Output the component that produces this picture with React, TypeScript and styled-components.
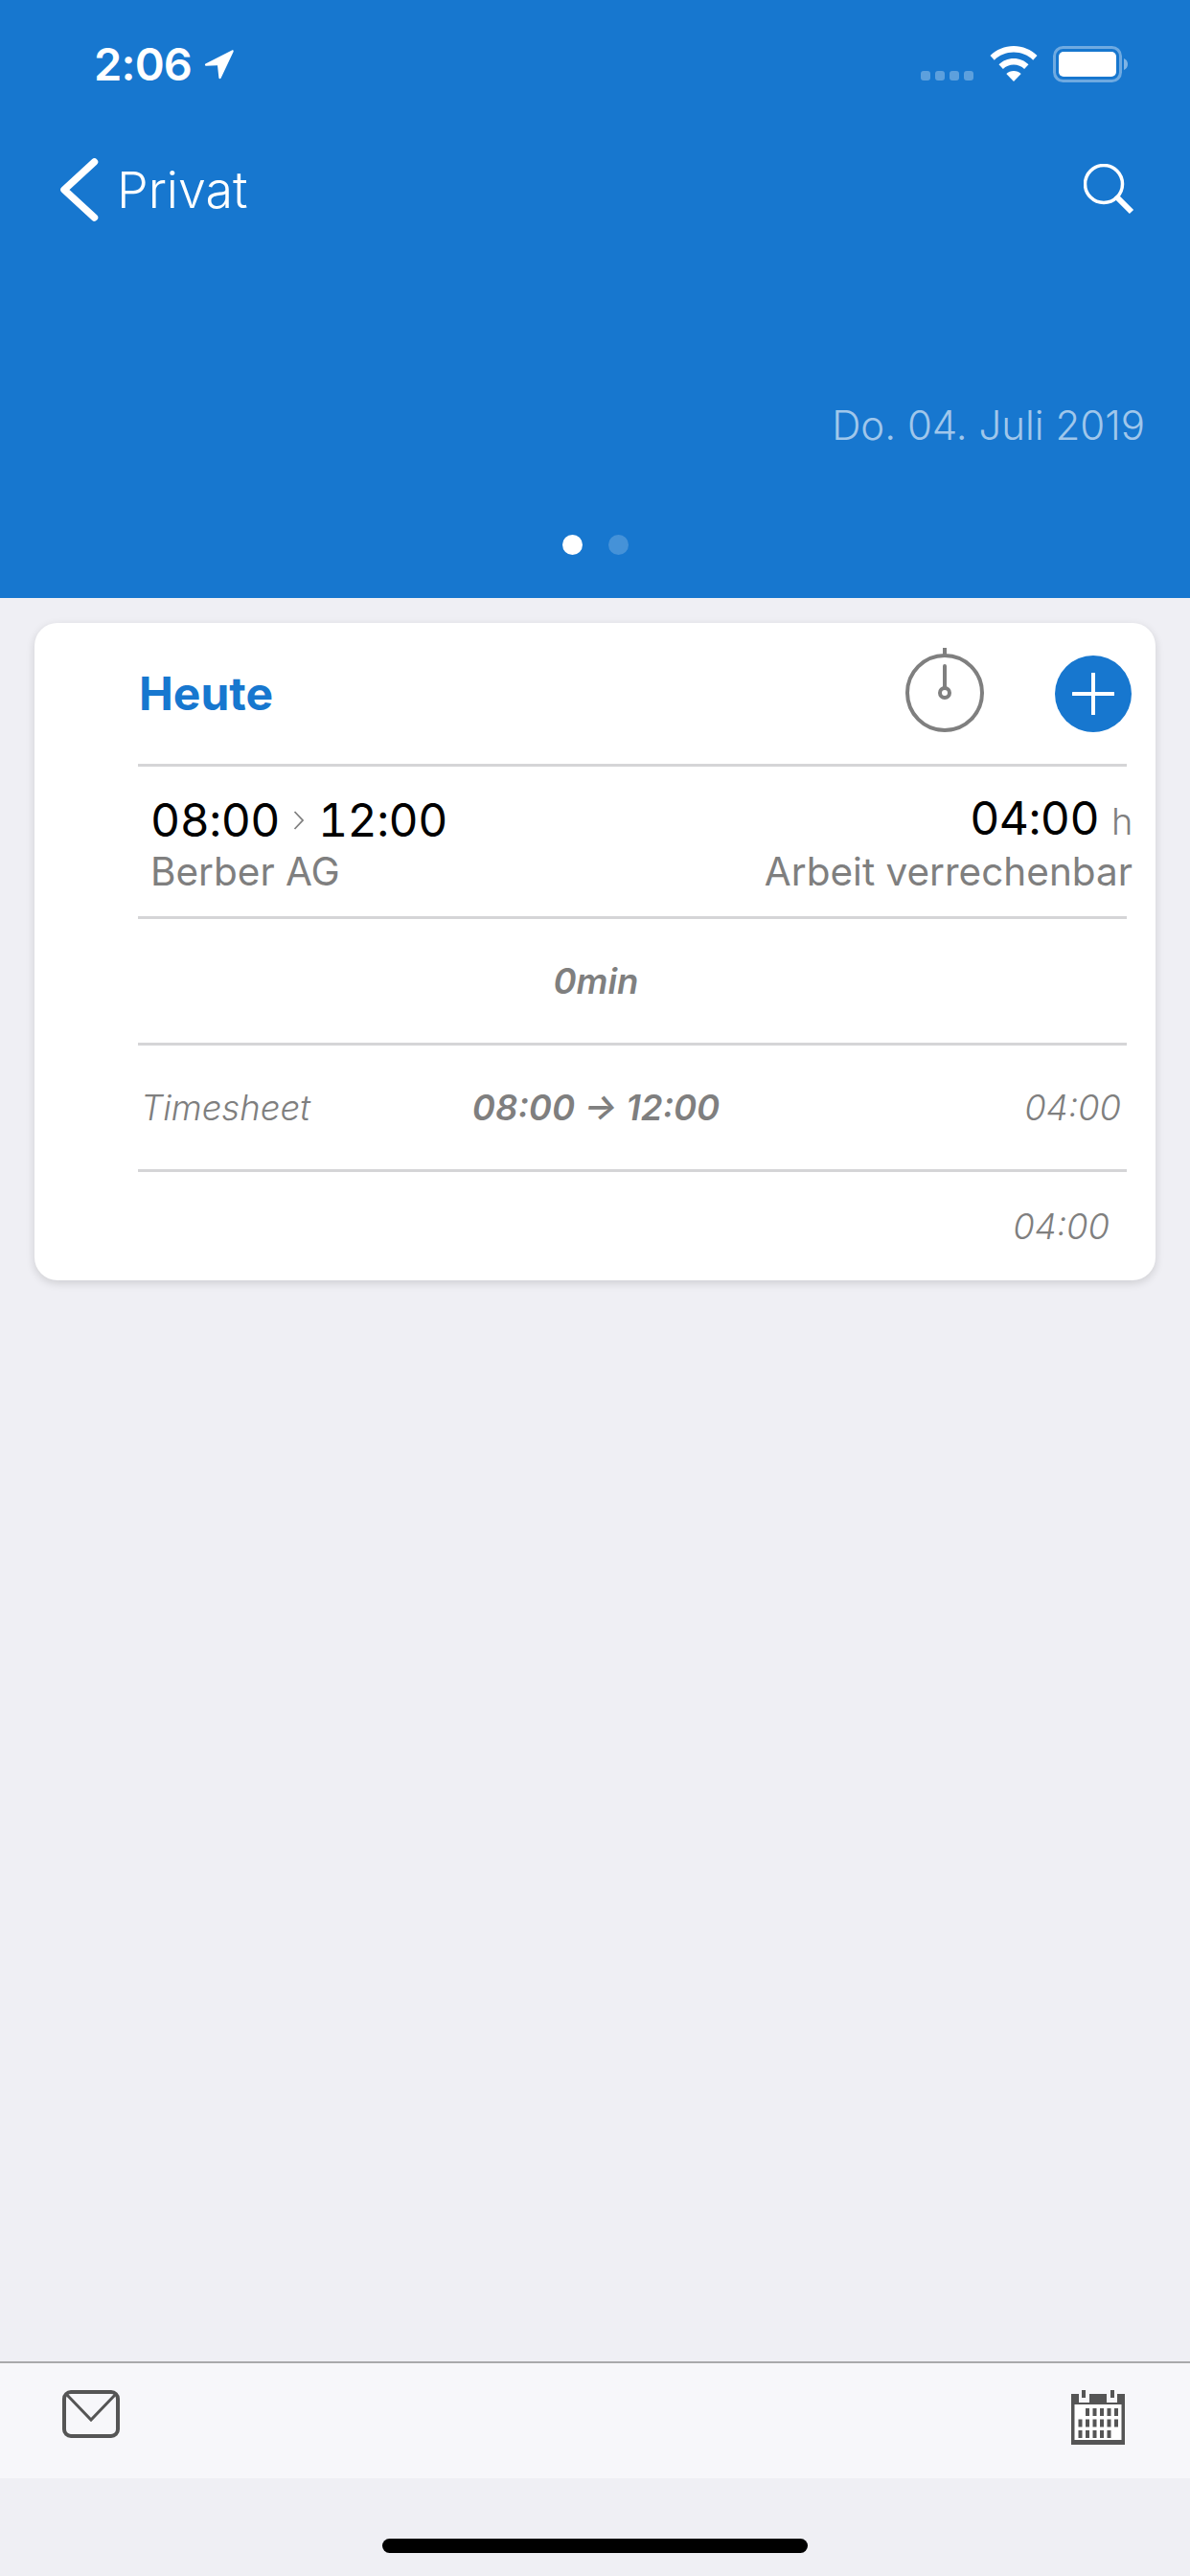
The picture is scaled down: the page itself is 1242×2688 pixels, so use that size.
import React from 'react';
import styled, { createGlobalStyle } from 'styled-components';

const BLUE = '#1777cf';
const GRAY = '#7f7f7f';
const LINE = '#d5d5d7';
const FONT = 'Inter, "Liberation Sans", sans-serif';

const GlobalStyle = createGlobalStyle`
  html, body {
    margin: 0;
    padding: 0;
    background: #efeff4;
    font-family: ${FONT};
  }
  * {
    box-sizing: border-box;
  }
`;

const Screen = styled.div`
  width: 1242px;
  height: 2688px;
  display: flex;
  flex-direction: column;
  background: #efeff4;
  overflow: hidden;
`;

const Header = styled.header`
  height: 624px;
  flex: none;
  display: flex;
  flex-direction: column;
  background: ${BLUE};
  color: #fff;
`;

const StatusBar = styled.div`
  height: 70px;
  margin-top: 43px;
  padding: 0 63px 0 98px;
  display: flex;
  align-items: flex-start;
  justify-content: space-between;
`;

const Clock = styled.div`
  display: flex;
  align-items: center;
  gap: 13px;
  font-size: 47px;
  line-height: 48px;
  font-weight: 600;
  letter-spacing: -0.8px;
`;

const StatusIcons = styled.div`
  display: flex;
  align-items: flex-start;
  gap: 16px;
  padding-top: 5px;
`;

const SignalDots = styled.div`
  display: flex;
  gap: 5px;
  padding-top: 26px;
  margin-right: 1px;
`;

const SignalDot = styled.span`
  width: 10px;
  height: 10px;
  border-radius: 3px;
  background: rgba(255, 255, 255, 0.3);
`;

const NavBar = styled.nav`
  height: 76px;
  margin-top: 47px;
  padding: 0 57px 0 62px;
  display: flex;
  align-items: center;
  justify-content: space-between;
`;

const BackLink = styled.div`
  display: flex;
  align-items: center;
  gap: 19px;
  font-size: 52px;
  font-weight: 300;
`;

const DateLabel = styled.div`
  margin-top: 183px;
  padding-right: 47px;
  text-align: right;
  font-size: 42px;
  line-height: 50px;
  font-weight: 300;
  color: rgba(255, 255, 255, 0.6);
`;

const Pager = styled.div`
  margin-top: 89px;
  display: flex;
  justify-content: center;
  gap: 27px;
`;

const PagerDot = styled.span<{ $active?: boolean }>`
  width: 21px;
  height: 21px;
  border-radius: 50%;
  background: ${(p) => (p.$active ? '#fff' : 'rgba(255, 255, 255, 0.2)')};
`;

const Card = styled.section`
  margin: 26px 36px 0;
  height: 686px;
  flex: none;
  padding: 0 16px 0 108px;
  background: #fff;
  border-radius: 24px;
  box-shadow: 0 3px 10px rgba(0, 0, 0, 0.14);
`;

const CardHeader = styled.div`
  height: 150px;
  padding-top: 26px;
  display: flex;
  align-items: flex-start;
  border-bottom: 3px solid ${LINE};
  margin-right: 14px;
`;

const Title = styled.h2`
  margin: 23px 0 0 1px;
  flex: 1;
  font-size: 48px;
  line-height: 50px;
  font-weight: 700;
  color: ${BLUE};
`;

const AddButton = styled.div`
  width: 80px;
  height: 80px;
  margin: 8px -5px 0 74px;
  border-radius: 50%;
  background: ${BLUE};
  display: flex;
  align-items: center;
  justify-content: center;
`;

const Row = styled.div<{ $height: number }>`
  height: ${(p) => p.$height}px;
  margin-right: 14px;
  border-bottom: 3px solid ${LINE};
  display: flex;
  align-items: center;
  justify-content: space-between;
`;

const EntryRow = styled(Row)`
  display: block;
  padding-top: 24px;
`;

const EntryLine = styled.div`
  display: flex;
  align-items: center;
  justify-content: space-between;
  padding-left: 13px;
  margin-right: -6px;
`;

const Times = styled.div`
  display: flex;
  align-items: center;
  gap: 14px;
  font-size: 48px;
  line-height: 60px;
  letter-spacing: -0.5px;
  font-feature-settings: 'tnum';
  color: #000;
`;

const Duration = styled.div`
  font-size: 48px;
  line-height: 60px;
  letter-spacing: -0.5px;
  font-feature-settings: 'tnum';
  color: #000;
`;

const Unit = styled.span`
  margin-left: 13px;
  font-size: 38px;
  font-weight: 300;
  color: ${GRAY};
`;

const Detail = styled.div`
  font-size: 40.5px;
  line-height: 46px;
  font-weight: 400;
  color: ${GRAY};
`;

const Note = styled.div<{ $bold?: boolean }>`
  font-size: 36.5px;
  line-height: 44px;
  font-style: italic;
  font-weight: ${(p) => (p.$bold ? 600 : 300)};
  color: ${GRAY};
`;

const TimesheetRow = styled(Row)`
  position: relative;
  padding: 0 6px 0 3px;
`;

const CenterNote = styled(Note)`
  position: absolute;
  left: 0;
  right: 76px;
  text-align: center;
`;

const TotalRow = styled.div`
  height: 113px;
  padding: 35px 18px 0 0;
  margin-right: 14px;
  text-align: right;
`;

const Spacer = styled.div`
  flex: 1;
`;

const TabBar = styled.footer`
  height: 122px;
  flex: none;
  padding: 28px 68px 0 65px;
  display: flex;
  align-items: flex-start;
  justify-content: space-between;
  background: #f7f7fa;
  border-top: 2px solid #a9a9ab;
`;

const HomeArea = styled.div`
  height: 102px;
  flex: none;
  padding-top: 63px;
  display: flex;
  justify-content: center;
`;

const HomeBar = styled.div`
  width: 444px;
  height: 15px;
  border-radius: 8px;
  background: #000;
`;

const LocationIcon = () => (
  <svg width="32" height="32" viewBox="0 0 32 32">
    <path d="M1.500 15.500 29 1.500c1.200-.6 2 .2 1.600 1.400L17.600 30.500c-.6 1.200-2 1-2.200-.3l-1.400-13L2 17.800c-1.200-.2-1.500-1.700-.5-2.300z" fill="#fff" />
  </svg>
);

const WifiIcon = () => (
  <svg width="50" height="37" viewBox="0 0 50 37">
    <path d="M25 0C15.500 0 7 3.700.5 10l4.300 4.700C10 9.500 17 6.500 25 6.500s15 3 20.200 8.200L49.500 10C43 3.700 34.500 0 25 0z" fill="#fff" />
    <path d="M25 13c-6 0-11.500 2.400-15.500 6.300l4.400 4.700c2.900-2.800 6.800-4.500 11.100-4.500s8.200 1.700 11.100 4.500l4.400-4.700C36.500 15.400 31 13 25 13z" fill="#fff" />
    <path d="M25 26c-3 0-5.700 1.200-7.700 3.100L25 37l7.700-7.900C30.700 27.200 28 26 25 26z" fill="#fff" />
  </svg>
);

const BatteryIcon = () => (
  <svg width="80" height="38" viewBox="0 0 80 38">
    <rect x="1.500" y="1.500" width="69" height="35" rx="9" fill="none" stroke="rgba(255,255,255,0.38)" strokeWidth="3" />
    <rect x="6" y="6" width="60" height="26" rx="5" fill="#fff" />
    <path d="M74 13c2.500 1 4 3.200 4 6s-1.500 5-4 6z" fill="rgba(255,255,255,0.45)" />
  </svg>
);

const ChevronLeftIcon = () => (
  <svg width="41" height="66" viewBox="0 0 41 66">
    <path d="M36.500 4 5 33 36.500 62" fill="none" stroke="#fff" strokeWidth="7.500" strokeLinecap="round" strokeLinejoin="round" />
  </svg>
);

const SearchIcon = () => (
  <svg width="54" height="54" viewBox="0 0 54 54">
    <circle cx="21" cy="21" r="19.500" fill="none" stroke="#fff" strokeWidth="3.500" />
    <path d="M33 34 36 37" stroke="#fff" strokeWidth="3" />
    <path d="M35.500 35.500 50 50" stroke="#fff" strokeWidth="6" />
  </svg>
);

const StopwatchIcon = () => (
  <svg width="82" height="88" viewBox="0 0 82 88">
    <circle cx="41" cy="47" r="39" fill="none" stroke="#7f7f7f" strokeWidth="4" />
    <path d="M41 0v8M41 19v27" stroke="#7f7f7f" strokeWidth="4" strokeLinecap="round" />
    <circle cx="41" cy="47" r="5" fill="#fff" stroke="#7f7f7f" strokeWidth="4" />
  </svg>
);

const PlusIcon = () => (
  <svg width="44" height="44" viewBox="0 0 44 44">
    <path d="M22 1v42M1 22h42" stroke="#fff" strokeWidth="4" strokeLinecap="round" />
  </svg>
);

const SmallChevron = () => (
  <svg width="12" height="22" viewBox="0 0 12 22">
    <path d="M1.500 2 10 11 1.500 20" fill="none" stroke="#7f7f7f" strokeWidth="1.800" />
  </svg>
);

const MailIcon = () => (
  <svg width="60" height="50" viewBox="0 0 60 50">
    <rect x="2" y="2" width="56" height="46" rx="7" fill="none" stroke="#555" strokeWidth="4" />
    <path d="M4 4 30 31 56 4" fill="none" stroke="#555" strokeWidth="3" />
  </svg>
);

const CalendarIcon = () => {
  const cells: [number, number][] = [];
  [1, 2, 3, 4, 5].forEach((c) => cells.push([c, 0]));
  [0, 1, 2, 3, 4, 5].forEach((c) => cells.push([c, 1]));
  [0, 1, 2, 3, 4].forEach((c) => cells.push([c, 2]));
  return (
    <svg width="56" height="57" viewBox="0 0 56 57">
      <path d="M0 4h8v9h11V4h18v9h11V4h8v53H0z" fill="#555" />
      <rect x="3.500" y="15" width="49" height="37" fill="#fff" />
      <rect x="11" y="0" width="4" height="8" fill="#555" />
      <rect x="41" y="0" width="4" height="8" fill="#555" />
      {cells.map(([c, r]) => (
        <rect key={`${c}-${r}`} x={7.5 + c * 7.5} y={19 + r * 11.5} width="4" height="8" fill="#555" />
      ))}
    </svg>
  );
};

const App: React.FC = () => (
  <>
    <GlobalStyle />
    <Screen>
      <Header>
        <StatusBar>
          <Clock>
            2:06
            <LocationIcon />
          </Clock>
          <StatusIcons>
            <SignalDots>
              <SignalDot />
              <SignalDot />
              <SignalDot />
              <SignalDot />
            </SignalDots>
            <WifiIcon />
            <BatteryIcon />
          </StatusIcons>
        </StatusBar>
        <NavBar>
          <BackLink>
            <ChevronLeftIcon />
            Privat
          </BackLink>
          <SearchIcon />
        </NavBar>
        <DateLabel>Do. 04. Juli 2019</DateLabel>
        <Pager>
          <PagerDot $active />
          <PagerDot />
        </Pager>
      </Header>
      <Card>
        <CardHeader>
          <Title>Heute</Title>
          <StopwatchIcon />
          <AddButton>
            <PlusIcon />
          </AddButton>
        </CardHeader>
        <EntryRow $height={159}>
          <EntryLine>
            <Times>
              08:00
              <SmallChevron />
              12:00
            </Times>
            <Duration>
              04:00
              <Unit>h</Unit>
            </Duration>
          </EntryLine>
          <EntryLine>
            <Detail>Berber AG</Detail>
            <Detail>Arbeit verrechenbar</Detail>
          </EntryLine>
        </EntryRow>
        <TimesheetRow $height={132}>
          <CenterNote $bold>0min</CenterNote>
        </TimesheetRow>
        <TimesheetRow $height={132}>
          <Note>Timesheet</Note>
          <CenterNote $bold>08:00 → 12:00</CenterNote>
          <Note>04:00</Note>
        </TimesheetRow>
        <TotalRow>
          <Note>04:00</Note>
        </TotalRow>
      </Card>
      <Spacer />
      <TabBar>
        <MailIcon />
        <CalendarIcon />
      </TabBar>
      <HomeArea>
        <HomeBar />
      </HomeArea>
    </Screen>
  </>
);

export default App;
